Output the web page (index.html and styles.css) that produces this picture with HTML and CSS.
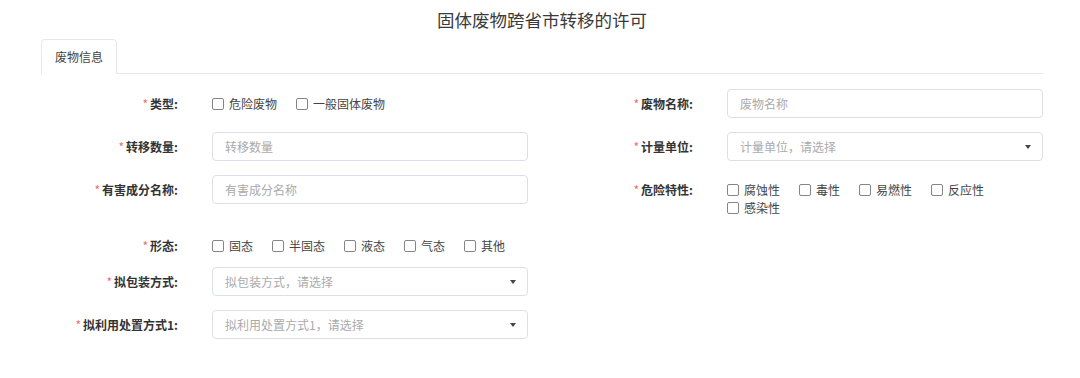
FILE: index.html
```html
<!DOCTYPE html>
<html lang="zh-CN">
<head>
<meta charset="utf-8">
<title>固体废物跨省市转移的许可</title>
<link rel="stylesheet" href="styles.css">
</head>
<body>
<div class="page">
  <h1 class="title">固体废物跨省市转移的许可</h1>
  <div class="tabs">
    <div class="tab tab-active">废物信息</div>
  </div>
  <form class="form">
    <div class="row">
      <div class="item">
        <label class="label"><span class="req">*</span>类型:</label>
        <div class="control checks">
          <span class="check"><span class="box"></span>危险废物</span>
          <span class="check"><span class="box"></span>一般固体废物</span>
        </div>
      </div>
      <div class="item">
        <label class="label"><span class="req">*</span>废物名称:</label>
        <div class="control"><input class="input" placeholder="废物名称"></div>
      </div>
    </div>
    <div class="row">
      <div class="item">
        <label class="label"><span class="req">*</span>转移数量:</label>
        <div class="control"><input class="input" placeholder="转移数量"></div>
      </div>
      <div class="item">
        <label class="label"><span class="req">*</span>计量单位:</label>
        <div class="control"><div class="select"><span class="ph">计量单位，请选择</span><span class="arrow"></span></div></div>
      </div>
    </div>
    <div class="row">
      <div class="item">
        <label class="label"><span class="req">*</span>有害成分名称:</label>
        <div class="control"><input class="input" placeholder="有害成分名称"></div>
      </div>
      <div class="item">
        <label class="label"><span class="req">*</span>危险特性:</label>
        <div class="control checks checks-multi">
          <span class="check"><span class="box"></span>腐蚀性</span>
          <span class="check"><span class="box"></span>毒性</span>
          <span class="check"><span class="box"></span>易燃性</span>
          <span class="check"><span class="box"></span>反应性</span>
          <span class="check"><span class="box"></span>感染性</span>
        </div>
      </div>
    </div>
    <div class="row row-compact">
      <div class="item">
        <label class="label"><span class="req">*</span>形态:</label>
        <div class="control checks">
          <span class="check"><span class="box"></span>固态</span>
          <span class="check"><span class="box"></span>半固态</span>
          <span class="check"><span class="box"></span>液态</span>
          <span class="check"><span class="box"></span>气态</span>
          <span class="check"><span class="box"></span>其他</span>
        </div>
      </div>
    </div>
    <div class="row">
      <div class="item">
        <label class="label"><span class="req">*</span>拟包装方式:</label>
        <div class="control"><div class="select"><span class="ph">拟包装方式，请选择</span><span class="arrow"></span></div></div>
      </div>
    </div>
    <div class="row">
      <div class="item">
        <label class="label"><span class="req">*</span>拟利用处置方式1:</label>
        <div class="control"><div class="select"><span class="ph">拟利用处置方式1，请选择</span><span class="arrow"></span></div></div>
      </div>
    </div>
  </form>
</div>
</body>
</html>
```
FILE: styles.css
```css
* { box-sizing: border-box; }
body {
  margin: 0;
  background: #fff;
  font-family: "Noto Sans CJK SC", "Noto Sans", sans-serif;
  color: #333;
}
.page { width: 1080px; }
.title {
  margin: 0;
  height: 39px;
  line-height: 39px;
  text-align: center;
  font-size: 17.5px;
  font-weight: normal;
  color: #3a3a3a;
  padding-left: 4px;
}
.tabs {
  margin-left: 41px;
  width: 1002px;
  height: 35px;
  border-bottom: 1px solid #e4e7ed;
  display: flex;
}
.tab {
  height: 35px;
  line-height: 33px;
  padding: 0 13px;
  font-size: 12px;
  color: #444;
  border: 1px solid #e4e7ed;
  border-bottom: none;
  border-radius: 4px 4px 0 0;
  background: #fff;
}
.form {
  margin: 15px 0 0 41px;
  width: 1002px;
}
.row {
  display: grid;
  grid-template-columns: 487px 487px;
  column-gap: 28px;
  margin-bottom: 14px;
}
.row-compact { margin-bottom: 7px; }
.item {
  display: flex;
  align-items: flex-start;
}
.label {
  flex: none;
  width: 171px;
  padding-right: 34px;
  text-align: right;
  line-height: 29px;
  font-size: 12px;
  font-weight: bold;
  color: #333;
}
.req {
  color: #f56c6c;
  font-weight: normal;
  margin-right: 2px;
}
.control {
  width: 316px;
  flex: none;
}
.input, .select {
  display: flex;
  align-items: center;
  width: 316px;
  height: 29px;
  border: 1px solid #dcdfe6;
  border-radius: 4px;
  padding: 0 12px;
  font-family: inherit;
  font-size: 12px;
  color: #333;
  background: #fff;
  outline: none;
}
.input::placeholder { color: #aaa; }
.select { justify-content: space-between; padding-right: 11px; }
.ph { color: #aaa; }
.arrow {
  width: 0;
  height: 0;
  border-left: 3.5px solid transparent;
  border-right: 3.5px solid transparent;
  border-top: 4px solid #444;
}
.checks {
  display: flex;
  flex-wrap: wrap;
  line-height: 29px;
  font-size: 12px;
  color: #444;
}
.checks-multi {
  line-height: 18px;
  padding-top: 6px;
}
.check {
  display: inline-flex;
  align-items: center;
  margin-right: 19px;
}
.box {
  width: 12px;
  height: 12px;
  border: 1px solid #858585;
  border-radius: 2px;
  background: #fff;
  margin-right: 5px;
}
```
